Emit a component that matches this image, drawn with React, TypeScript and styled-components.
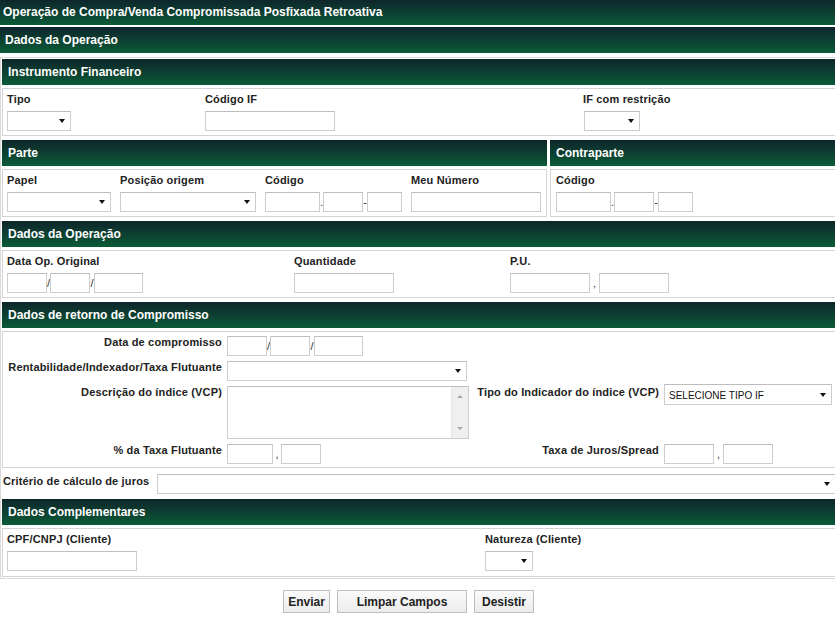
import styled, { createGlobalStyle } from "styled-components";

const GlobalStyle = createGlobalStyle`
  html, body {
    margin: 0;
    padding: 0;
    background: #fff;
    overflow: hidden;
  }
  body {
    font-family: "Liberation Sans", Arial, sans-serif;
    color: #222;
  }
`;

const GREEN = "linear-gradient(to bottom, #0e262b 0%, #0d4232 55%, #0b5b37 100%)";

const Page = styled.div`
  width: 838px;
`;

const TitleBar = styled.div`
  height: 25px;
  line-height: 25px;
  padding-left: 3px;
  background: ${GREEN};
  color: #fff;
  font-size: 12px;
  font-weight: bold;
  white-space: nowrap;
`;

const MainBar = styled.div`
  margin-top: 2px;
  height: 26px;
  line-height: 26px;
  padding-left: 5px;
  background: ${GREEN};
  color: #fff;
  font-size: 12px;
  font-weight: bold;
`;

const Form = styled.div`
  margin-top: 4px;
  border: 1px solid #dadada;
  padding: 1px;
`;

const Section = styled.section<{ $mt?: number }>`
  margin-top: ${(p) => p.$mt ?? 4}px;
`;

const SplitRow = styled.div`
  display: flex;
  gap: 3px;
  margin-top: 4px;
`;

const Column = styled.div<{ $w?: number }>`
  ${(p) => (p.$w ? `width: ${p.$w}px; flex-shrink: 0;` : "flex: 1;")}
`;

const Bar = styled.div<{ $pl?: number }>`
  height: 26px;
  line-height: 26px;
  padding-left: ${(p) => p.$pl ?? 6}px;
  background: ${GREEN};
  color: #fff;
  font-size: 12px;
  font-weight: bold;
  white-space: nowrap;
`;

const Box = styled.div<{ $pl?: number; $pb?: number }>`
  margin-top: 3px;
  border: 1px solid #d4d4d4;
  padding: 4px 4px ${(p) => p.$pb ?? 4}px ${(p) => p.$pl ?? 4}px;
  display: flex;
  align-items: flex-start;
`;

const Field = styled.div<{ $w?: number }>`
  display: flex;
  flex-direction: column;
  gap: 5px;
  ${(p) => (p.$w ? `width: ${p.$w}px; flex-shrink: 0;` : "flex: 1;")}
`;

const Label = styled.div<{ $align?: string }>`
  font-size: 11px;
  font-weight: bold;
  line-height: 13px;
  letter-spacing: 0.16px;
  color: #222;
  white-space: nowrap;
  text-align: ${(p) => p.$align ?? "left"};
`;

const Inputs = styled.div`
  display: flex;
  align-items: flex-start;
`;

const Sep = styled.span<{ $w?: number }>`
  width: ${(p) => p.$w ?? 3}px;
  flex-shrink: 0;
  text-align: center;
  font-size: 11px;
  line-height: 20px;
  color: #333;
`;

const TextInput = styled.div<{ $w: number }>`
  box-sizing: border-box;
  width: ${(p) => p.$w}px;
  height: 20px;
  flex-shrink: 0;
  border: 1px solid #cdcdcd;
  border-top-color: #bdbdbd;
  background: #fff;
`;

const SelectBox = styled.div<{ $w?: number; $h?: number }>`
  box-sizing: border-box;
  ${(p) => (p.$w ? `width: ${p.$w}px; flex-shrink: 0;` : "flex: 1;")}
  height: ${(p) => p.$h ?? 20}px;
  border: 1px solid #cdcdcd;
  border-top-color: #bdbdbd;
  background: #fff;
  display: flex;
  align-items: center;
  padding: 0 5px 0 4px;
  font-size: 10px;
  color: #111;
  white-space: nowrap;
`;

const SelectText = styled.span`
  flex: 1;
  padding-top: 1px;
`;

const Arrow = styled.span`
  margin-left: auto;
  width: 0;
  height: 0;
  border-left: 3.5px solid transparent;
  border-right: 3.5px solid transparent;
  border-top: 4px solid #111;
`;

const TextArea = styled.div`
  box-sizing: border-box;
  width: 242px;
  height: 53px;
  border: 1px solid #cdcdcd;
  border-top-color: #bdbdbd;
  display: flex;
  justify-content: flex-end;
`;

const ScrollTrack = styled.div`
  width: 16px;
  background: #efefef;
  border-left: 1px solid #e6e6e6;
  display: flex;
  flex-direction: column;
  align-items: center;
  justify-content: space-between;
  padding: 8px 0 8px;
`;

const ScrollArrow = styled.span<{ $up?: boolean }>`
  width: 0;
  height: 0;
  border-left: 3px solid transparent;
  border-right: 3px solid transparent;
  ${(p) => (p.$up ? "border-bottom: 3px solid #a8a8a8;" : "border-top: 3px solid #a8a8a8;")}
`;

const ReturnGrid = styled.div`
  margin-top: 3px;
  border: 1px solid #d4d4d4;
  padding: 4px 0 3px 0;
  display: grid;
  grid-template-columns: 219px 243px 184px 1fr;
  column-gap: 5px;
  row-gap: 5px;
  align-items: start;
`;

const Cell = styled.div<{ $mt?: number }>`
  display: flex;
  align-items: flex-start;
  margin-top: ${(p) => p.$mt ?? 0}px;
`;

const CritRow = styled.div`
  margin-top: 6px;
  padding-left: 1px;
  display: flex;
  align-items: flex-start;
`;

const CritLabel = styled(Label)`
  width: 154px;
  flex-shrink: 0;
  padding-top: 1px;
`;

const ButtonRow = styled.div`
  margin-top: 11px;
  padding-left: 283px;
  display: flex;
  gap: 7px;
`;

const Button = styled.button<{ $w: number }>`
  box-sizing: border-box;
  width: ${(p) => p.$w}px;
  height: 23px;
  padding: 0;
  border: 1px solid #bdbdbd;
  background: linear-gradient(to bottom, #fafafa 0%, #ececec 100%);
  font-family: "Liberation Sans", Arial, sans-serif;
  font-size: 12px;
  font-weight: bold;
  color: #222;
  cursor: pointer;
`;

function Select({ w, h, text }: { w?: number; h?: number; text?: string }) {
  return (
    <SelectBox $w={w} $h={h}>
      {text && <SelectText>{text}</SelectText>}
      <Arrow />
    </SelectBox>
  );
}

function DateInputs() {
  return (
    <Inputs>
      <TextInput $w={40} />
      <Sep>/</Sep>
      <TextInput $w={40} />
      <Sep $w={4}>/</Sep>
      <TextInput $w={49} />
    </Inputs>
  );
}

function CodeInputs() {
  return (
    <Inputs>
      <TextInput $w={55} />
      <Sep>.</Sep>
      <TextInput $w={40} />
      <Sep $w={4}>-</Sep>
      <TextInput $w={35} />
    </Inputs>
  );
}

export default function App() {
  return (
    <Page>
      <GlobalStyle />
      <TitleBar>Operação de Compra/Venda Compromissada Posfixada Retroativa</TitleBar>
      <MainBar>Dados da Operação</MainBar>

      <Form>
        <Section $mt={0}>
          <Bar>Instrumento Financeiro</Bar>
          <Box>
            <Field $w={198}>
              <Label>Tipo</Label>
              <Select w={64} />
            </Field>
            <Field $w={378}>
              <Label>Código IF</Label>
              <TextInput $w={130} />
            </Field>
            <Field>
              <Label>IF com restrição</Label>
              <Inputs>
                <Sep $w={1} />
                <Select w={56} />
              </Inputs>
            </Field>
          </Box>
        </Section>

        <SplitRow>
          <Column $w={545}>
            <Bar>Parte</Bar>
            <Box>
              <Field $w={113}>
                <Label>Papel</Label>
                <Select w={104} />
              </Field>
              <Field $w={145}>
                <Label>Posição origem</Label>
                <Select w={136} />
              </Field>
              <Field $w={146}>
                <Label>Código</Label>
                <CodeInputs />
              </Field>
              <Field>
                <Label>Meu Número</Label>
                <TextInput $w={130} />
              </Field>
            </Box>
          </Column>
          <Column>
            <Bar>Contraparte</Bar>
            <Box $pl={5}>
              <Field>
                <Label>Código</Label>
                <CodeInputs />
              </Field>
            </Box>
          </Column>
        </SplitRow>

        <Section>
          <Bar>Dados da Operação</Bar>
          <Box>
            <Field $w={287}>
              <Label>Data Op. Original</Label>
              <DateInputs />
            </Field>
            <Field $w={216}>
              <Label>Quantidade</Label>
              <TextInput $w={100} />
            </Field>
            <Field>
              <Label>P.U.</Label>
              <Inputs>
                <TextInput $w={80} />
                <Sep $w={9}>,</Sep>
                <TextInput $w={70} />
              </Inputs>
            </Field>
          </Box>
        </Section>

        <Section>
          <Bar>Dados de retorno de Compromisso</Bar>
          <ReturnGrid>
            <Label $align="right">Data de compromisso</Label>
            <Cell>
              <DateInputs />
            </Cell>
            <div />
            <div />

            <Label $align="right">Rentabilidade/Indexador/Taxa Flutuante</Label>
            <Cell>
              <Select w={240} />
            </Cell>
            <div />
            <div />

            <Label $align="right">Descrição do índice (VCP)</Label>
            <Cell>
              <TextArea>
                <ScrollTrack>
                  <ScrollArrow $up />
                  <ScrollArrow />
                </ScrollTrack>
              </TextArea>
            </Cell>
            <Label $align="right">Tipo do Indicador do índice (VCP)</Label>
            <Cell $mt={-2}>
              <Select w={168} h={21} text="SELECIONE TIPO IF" />
            </Cell>

            <Label $align="right">% da Taxa Flutuante</Label>
            <Cell>
              <Inputs>
                <TextInput $w={46} />
                <Sep $w={8}>,</Sep>
                <TextInput $w={40} />
              </Inputs>
            </Cell>
            <Label $align="right">Taxa de Juros/Spread</Label>
            <Cell>
              <Inputs>
                <TextInput $w={50} />
                <Sep $w={9}>,</Sep>
                <TextInput $w={50} />
              </Inputs>
            </Cell>
          </ReturnGrid>
        </Section>

        <CritRow>
          <CritLabel>Critério de cálculo de juros</CritLabel>
          <Select />
        </CritRow>

        <Section $mt={5}>
          <Bar>Dados Complementares</Bar>
          <Box $pb={5}>
            <Field $w={478}>
              <Label>CPF/CNPJ (Cliente)</Label>
              <TextInput $w={130} />
            </Field>
            <Field>
              <Label>Natureza (Cliente)</Label>
              <Select w={48} />
            </Field>
          </Box>
        </Section>
      </Form>

      <ButtonRow>
        <Button $w={47}>Enviar</Button>
        <Button $w={130}>Limpar Campos</Button>
        <Button $w={60}>Desistir</Button>
      </ButtonRow>
    </Page>
  );
}
